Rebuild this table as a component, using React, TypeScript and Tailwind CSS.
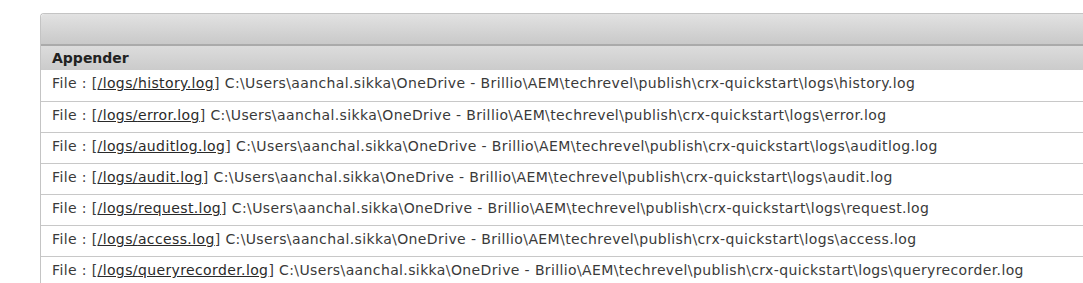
const base = "C:\\Users\\aanchal.sikka\\OneDrive - Brillio\\AEM\\techrevel\\publish\\crx-quickstart\\logs\\";

const appenders = [
  "history.log",
  "error.log",
  "auditlog.log",
  "audit.log",
  "request.log",
  "access.log",
  "queryrecorder.log",
];

export default function App() {
  return (
    <div className="bg-white w-[1083px] h-[283px] overflow-hidden pt-[13px] pl-[40px] font-['DejaVu_Sans',sans-serif] text-[14px] tracking-[0.38px] text-[#3a3a3a]">
      <div className="w-[1060px] border border-[#c4c4c4] rounded-tl-[4px] border-r-0 border-b-0">
        <div className="h-[32px] bg-gradient-to-b from-[#e2e2e2] to-[#c9c9c9] border-b-2 border-[#aaa] rounded-tl-[4px]" />
        <div className="h-[24px] flex items-center px-[11px] pt-[1px] bg-gradient-to-b from-[#dcdcdc] to-[#cbcbcb] font-bold text-[#222] tracking-normal">
          Appender
        </div>
        {appenders.map((name, i) => (
          <div
            key={name}
            className={`h-[31px] pt-[4px] px-[11px] leading-[18px] whitespace-nowrap ${i > 0 ? "border-t border-[#c8c8c8]" : ""}`}
          >
            File : [<a className="underline text-[#2a2a2a]">/logs/{name}</a>] {base}
            {name}
          </div>
        ))}
      </div>
    </div>
  );
}
